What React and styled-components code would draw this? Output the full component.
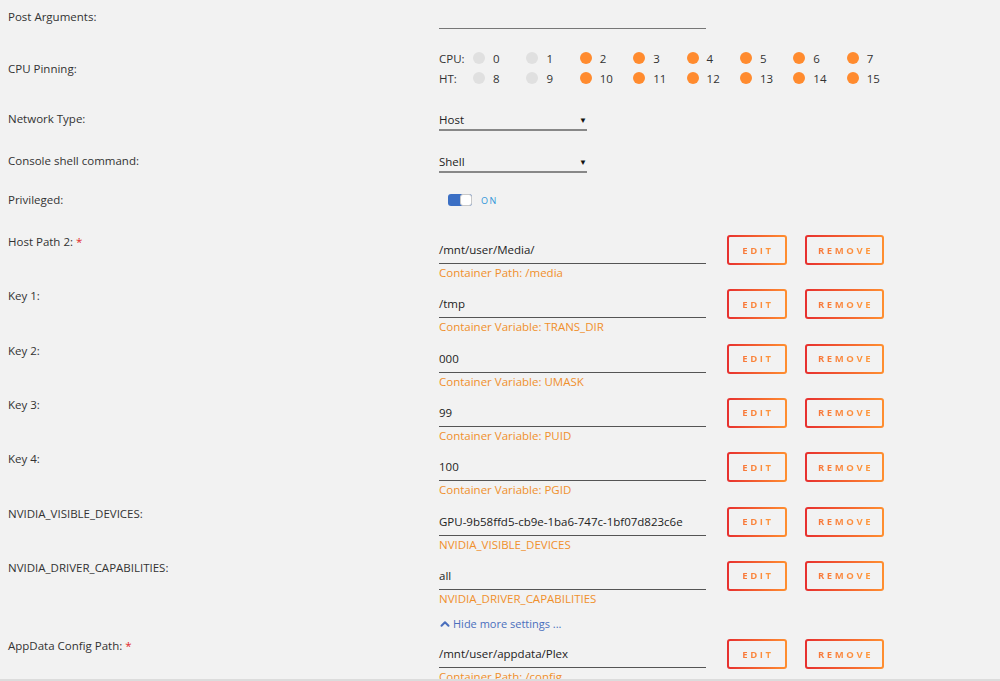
import React from "react";
import styled, { createGlobalStyle } from "styled-components";
import { ChevronUp } from "lucide-react";

const Global = createGlobalStyle`
  html, body { margin: 0; padding: 0; background: #f2f2f2; }
  body { font-family: "Open Sans", "Noto Sans", sans-serif; }
`;

const Page = styled.div`
  width: 1000px;
  height: 681px;
  overflow: hidden;
  background: #f2f2f2;
  display: flex;
  flex-direction: column;
  color: #333;
  font-size: 11.5px;
`;

const Form = styled.div`
  height: 679px;
  flex: none;
  overflow: hidden;
  padding-left: 8px;
`;

const BottomBar = styled.div`
  height: 2px;
  background: #dcdcdc;
  flex: none;
`;

const Row = styled.div`
  display: grid;
  grid-template-columns: 431px 1fr;
  align-items: start;
  align-content: start;
  height: ${(p) => p.$h}px;
  padding-top: ${(p) => p.$pt || 0}px;
  box-sizing: border-box;
`;

const Label = styled.div`
  line-height: 20px;
  color: #333;
  white-space: nowrap;
  margin-top: ${(p) => p.$mt || 0}px;
`;

const Req = styled.span`
  color: #e22828;
  margin-left: 3px;
`;

const TextField = styled.div`
  width: 267px;
  height: 22px;
  box-sizing: border-box;
  border-bottom: 1px solid #777;
`;

const Select = styled.div`
  width: 148px;
  box-sizing: border-box;
  line-height: 19px;
  border-bottom: 2px solid #888;
  display: flex;
  justify-content: space-between;
  align-items: center;
  color: #222;
  margin-top: 1px;
`;

const Caret = styled.span`
  font-size: 8px;
  color: #111;
`;

const Pins = styled.div`
  display: flex;
  flex-direction: column;
`;

const PinLine = styled.div`
  display: flex;
  align-items: center;
  height: 20px;
`;

const PinTag = styled.span`
  width: 34px;
  flex: none;
`;

const PinCell = styled.span`
  width: 53.4px;
  flex: none;
  display: flex;
  align-items: center;
  gap: 8px;
`;

const Dot = styled.span`
  width: 12px;
  height: 12px;
  border-radius: 50%;
  background: ${(p) => (p.$on ? "#ff8b2f" : "#e0e0e0")};
`;

const SwitchWrap = styled.div`
  display: flex;
  align-items: center;
  height: 20px;
  padding-left: 9px;
  gap: 9px;
`;

const Track = styled.span`
  position: relative;
  width: 24px;
  height: 12px;
  border-radius: 3px;
  background: #3b6fc4;
  box-sizing: border-box;
`;

const Knob = styled.span`
  position: absolute;
  right: 0;
  top: 0;
  width: 12px;
  height: 12px;
  border-radius: 3px;
  background: #fff;
  border: 1px solid #c8c8c8;
  box-sizing: border-box;
`;

const OnText = styled.span`
  font-size: 9px;
  letter-spacing: 1.5px;
  color: #2f95d9;
`;

const PathRow = styled.div`
  display: grid;
  grid-template-columns: 431px 267px auto;
  align-items: start;
  height: 54.33px;
`;

const Field = styled.div`
  display: flex;
  flex-direction: column;
`;

const Value = styled.div`
  padding-top: 8px;
  padding-bottom: 3px;
  line-height: 20px;
  color: #222;
  border-bottom: 1.5px solid #555;
  white-space: nowrap;
`;

const Desc = styled.div`
  margin-top: 2px;
  line-height: 14px;
  color: #f0902c;
  white-space: nowrap;
`;

const Actions = styled.div`
  display: flex;
  gap: 18px;
  margin-left: 21px;
  margin-top: 3px;
`;

const Btn = styled.div`
  width: ${(p) => p.$w}px;
  height: 30px;
  box-sizing: border-box;
  border: 2px solid transparent;
  border-radius: 3px;
  background: linear-gradient(#f2f2f2, #f2f2f2) padding-box,
    linear-gradient(90deg, #e7302f, #ff8f30) border-box;
  display: flex;
  align-items: center;
  justify-content: center;
`;

const BtnText = styled.span`
  font-size: 9.5px;
  font-weight: 700;
  letter-spacing: 2.6px;
  padding-left: 2px;
  background: linear-gradient(90deg, #f7753a, #ff9a3c);
  -webkit-background-clip: text;
  background-clip: text;
  color: transparent;
`;

const HideRow = styled.div`
  height: 24px;
  padding-left: 430px;
  box-sizing: border-box;
  display: flex;
  align-items: center;
`;

const HideLink = styled.span`
  display: flex;
  align-items: center;
  gap: 1px;
  line-height: 20px;
  font-size: 11px;
  color: #4a6fbd;
`;

const cpu = [0, 1, 2, 3, 4, 5, 6, 7];
const ht = [8, 9, 10, 11, 12, 13, 14, 15];
const isOn = (n) => !(n === 0 || n === 1 || n === 8 || n === 9);

const paths = [
  { label: "Host Path 2:", req: true, value: "/mnt/user/Media/", desc: "Container Path: /media" },
  { label: "Key 1:", value: "/tmp", desc: "Container Variable: TRANS_DIR" },
  { label: "Key 2:", value: "000", desc: "Container Variable: UMASK" },
  { label: "Key 3:", value: "99", desc: "Container Variable: PUID" },
  { label: "Key 4:", value: "100", desc: "Container Variable: PGID" },
  { label: "NVIDIA_VISIBLE_DEVICES:", value: "GPU-9b58ffd5-cb9e-1ba6-747c-1bf07d823c6e", desc: "NVIDIA_VISIBLE_DEVICES" },
  { label: "NVIDIA_DRIVER_CAPABILITIES:", value: "all", desc: "NVIDIA_DRIVER_CAPABILITIES" },
];

function PathEntry({ p }) {
  return (
    <PathRow>
      <Label>
        {p.label}
        {p.req && <Req>*</Req>}
      </Label>
      <Field>
        <Value>{p.value}</Value>
        <Desc>{p.desc}</Desc>
      </Field>
      <Actions>
        <Btn $w={60}><BtnText>EDIT</BtnText></Btn>
        <Btn $w={79}><BtnText>REMOVE</BtnText></Btn>
      </Actions>
    </PathRow>
  );
}

function PinRow({ tag, list }) {
  return (
    <PinLine>
      <PinTag>{tag}</PinTag>
      {list.map((n) => (
        <PinCell key={n}>
          <Dot $on={isOn(n)} />
          {n}
        </PinCell>
      ))}
    </PinLine>
  );
}

export default function App() {
  return (
    <Page>
      <Global />
      <Form>
        <Row $h={45} $pt={7}>
          <Label>Post Arguments:</Label>
          <TextField />
        </Row>
        <Row $h={55} $pt={3}>
          <Label $mt={11}>CPU Pinning:</Label>
          <Pins>
            <PinRow tag="CPU:" list={cpu} />
            <PinRow tag="HT:" list={ht} />
          </Pins>
        </Row>
        <Row $h={42} $pt={9}>
          <Label>Network Type:</Label>
          <Select>
            Host<Caret>▼</Caret>
          </Select>
        </Row>
        <Row $h={42} $pt={9}>
          <Label>Console shell command:</Label>
          <Select>
            Shell<Caret>▼</Caret>
          </Select>
        </Row>
        <Row $h={48} $pt={6}>
          <Label>Privileged:</Label>
          <SwitchWrap>
            <Track>
              <Knob />
            </Track>
            <OnText>ON</OnText>
          </SwitchWrap>
        </Row>
        {paths.map((p) => (
          <PathEntry key={p.label} p={p} />
        ))}
        <HideRow>
          <HideLink>
            <ChevronUp size={14} strokeWidth={3.5} color="#4a6fbd" />
            Hide more settings ...
          </HideLink>
        </HideRow>
        <PathEntry
          p={{
            label: "AppData Config Path:",
            req: true,
            value: "/mnt/user/appdata/Plex",
            desc: "Container Path: /config",
          }}
        />
      </Form>
      <BottomBar />
    </Page>
  );
}
